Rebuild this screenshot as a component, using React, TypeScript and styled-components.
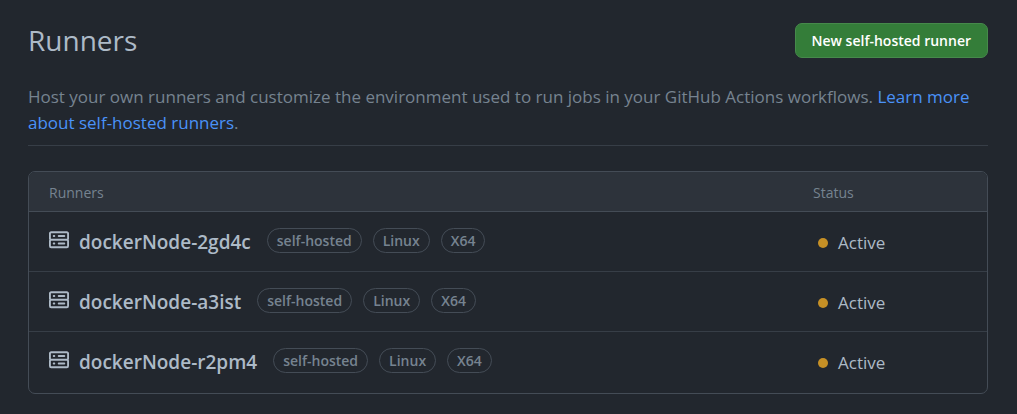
import React from "react";
import styled, { createGlobalStyle } from "styled-components";

const GlobalStyle = createGlobalStyle`
  *, *::before, *::after { box-sizing: border-box; }
  body {
    margin: 0;
    background: #22272e;
    color: #adbac7;
    font-family: "Segoe UI", "Open Sans", "Noto Sans", sans-serif;
    font-size: 17px;
    line-height: 26px;
  }
`;

const Page = styled.main`
  padding: 20px 29px 20px 28px;
`;

const PageHeader = styled.header`
  display: flex;
  align-items: center;
  justify-content: space-between;
  gap: 16px;
`;

const Title = styled.h1`
  margin: 0;
  font-size: 28px;
  font-weight: 400;
  line-height: 41px;
`;

const PrimaryButton = styled.button`
  height: 35px;
  padding: 0 16px;
  border: 1px solid #46894b;
  border-radius: 7px;
  background: #347d39;
  color: #ffffff;
  font: inherit;
  font-size: 14px;
  font-weight: 600;
  white-space: nowrap;
  cursor: pointer;
`;

const Description = styled.p`
  margin: 23px 0 0;
  padding-bottom: 9px;
  border-bottom: 1px solid #373e47;
  color: #768390;
`;

const Link = styled.a`
  color: #4a92f8;
  text-decoration: none;
  &:hover { text-decoration: underline; }
`;

const RunnerTable = styled.table`
  width: 100%;
  margin-top: 25px;
  table-layout: fixed;
  border: 1px solid #444c56;
  border-radius: 7px;
  border-spacing: 0;
  overflow: hidden;
`;

const HeadCell = styled.th<{ $width?: string }>`
  width: ${({ $width }) => $width ?? "auto"};
  height: 40px;
  padding: 2px 20px 0;
  border-bottom: 1px solid #444c56;
  background: #2d333b;
  color: #768390;
  font-size: 14px;
  font-weight: 400;
  text-align: left;
`;

const Cell = styled.td`
  height: 60px;
  padding: 0 20px;
  vertical-align: middle;
  tr:not(:last-child) > & { border-bottom: 1px solid #373e47; }
  tr:last-child > & { height: 61px; padding-bottom: 1px; }
`;

const RunnerInfo = styled.div`
  display: flex;
  align-items: center;
`;

const ServerSvg = styled.svg`
  flex: none;
  width: 20px;
  height: 20px;
  margin: 0 10px 4px 0;
  fill: currentColor;
`;

const RunnerName = styled.span`
  margin-right: 16px;
  font-size: 19px;
  font-weight: 600;
`;

const Labels = styled.ul`
  display: flex;
  gap: 11px;
  margin: 0 0 3px;
  padding: 0;
  list-style: none;
`;

const Label = styled.li`
  padding: 0 9px;
  border: 1px solid #444c56;
  border-radius: 13px;
  color: #768390;
  font-size: 14px;
  font-weight: 600;
  line-height: 23px;
`;

const Status = styled.div`
  display: flex;
  align-items: center;
  gap: 10px;
  padding: 2px 0 0 5px;
`;

const Dot = styled.span`
  width: 10px;
  height: 10px;
  border-radius: 50%;
  background: #c69026;
`;

const ServerIcon = () => (
  <ServerSvg viewBox="0 0 16 16" aria-hidden="true">
    <path d="M1.75 1h12.5c.966 0 1.75.784 1.75 1.75v4c0 .372-.116.717-.314 1 .198.283.314.628.314 1v4a1.75 1.75 0 0 1-1.75 1.75H1.75A1.75 1.75 0 0 1 0 12.75v-4c0-.358.109-.707.314-1a1.739 1.739 0 0 1-.314-1v-4C0 1.784.784 1 1.75 1ZM1.5 2.75v4c0 .138.112.25.25.25h12.5a.25.25 0 0 0 .25-.25v-4a.25.25 0 0 0-.25-.25H1.75a.25.25 0 0 0-.25.25Zm.25 5.75a.25.25 0 0 0-.25.25v4c0 .138.112.25.25.25h12.5a.25.25 0 0 0 .25-.25v-4a.25.25 0 0 0-.25-.25ZM7 4.75A.75.75 0 0 1 7.75 4h4.5a.75.75 0 0 1 0 1.5h-4.5A.75.75 0 0 1 7 4.75ZM7.75 10h4.5a.75.75 0 0 1 0 1.5h-4.5a.75.75 0 0 1 0-1.5ZM3 4.75A.75.75 0 0 1 3.75 4h.5a.75.75 0 0 1 0 1.5h-.5A.75.75 0 0 1 3 4.75ZM3.75 10h.5a.75.75 0 0 1 0 1.5h-.5a.75.75 0 0 1 0-1.5Z" />
  </ServerSvg>
);

interface Runner {
  name: string;
  labels: string[];
  status: string;
}

const runners: Runner[] = [
  { name: "dockerNode-2gd4c", labels: ["self-hosted", "Linux", "X64"], status: "Active" },
  { name: "dockerNode-a3ist", labels: ["self-hosted", "Linux", "X64"], status: "Active" },
  { name: "dockerNode-r2pm4", labels: ["self-hosted", "Linux", "X64"], status: "Active" },
];

export default function App() {
  return (
    <>
      <GlobalStyle />
      <Page>
        <PageHeader>
          <Title>Runners</Title>
          <PrimaryButton type="button">New self-hosted runner</PrimaryButton>
        </PageHeader>
        <Description>
          Host your own runners and customize the environment used to run jobs in your GitHub
          Actions workflows. <Link href="#learn-more">Learn more about self-hosted runners</Link>.
        </Description>
        <RunnerTable>
          <thead>
            <tr>
              <HeadCell scope="col">Runners</HeadCell>
              <HeadCell scope="col" $width="194px">Status</HeadCell>
            </tr>
          </thead>
          <tbody>
            {runners.map((runner) => (
              <tr key={runner.name}>
                <Cell>
                  <RunnerInfo>
                    <ServerIcon />
                    <RunnerName>{runner.name}</RunnerName>
                    <Labels>
                      {runner.labels.map((label) => (
                        <Label key={label}>{label}</Label>
                      ))}
                    </Labels>
                  </RunnerInfo>
                </Cell>
                <Cell>
                  <Status>
                    <Dot />
                    {runner.status}
                  </Status>
                </Cell>
              </tr>
            ))}
          </tbody>
        </RunnerTable>
      </Page>
    </>
  );
}
